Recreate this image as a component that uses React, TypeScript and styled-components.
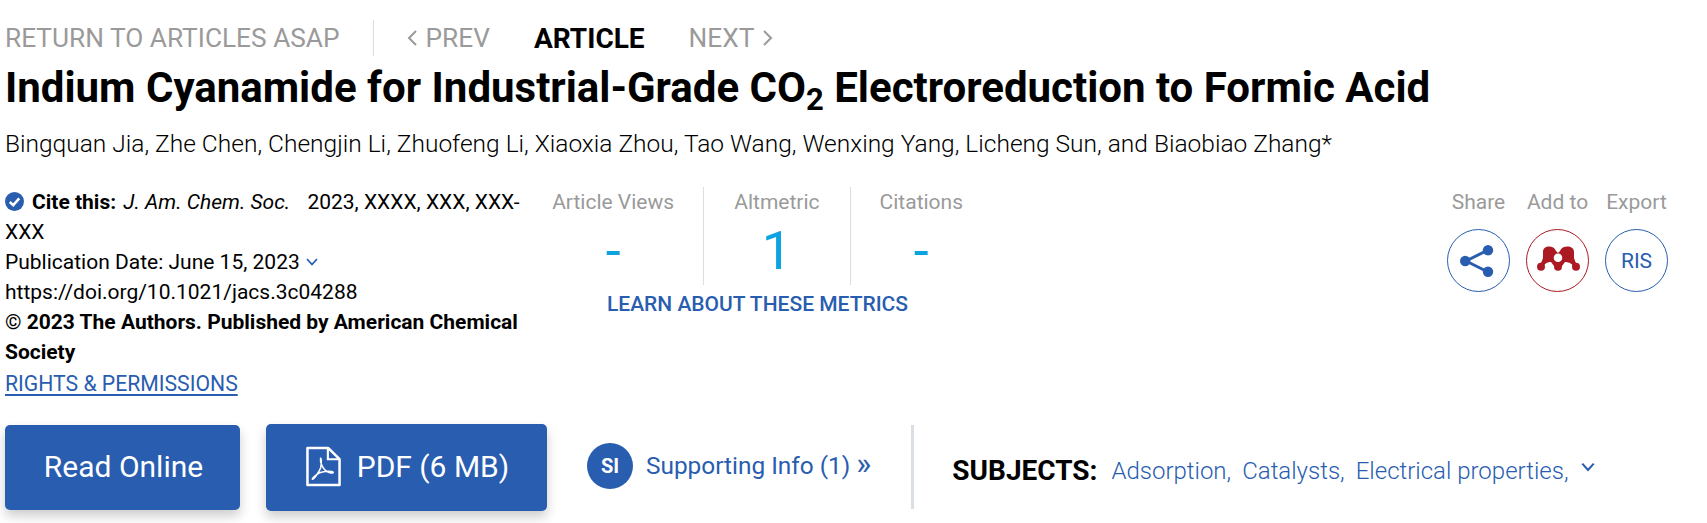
import React from 'react';
import styled, {createGlobalStyle} from 'styled-components';

const BLUE = '#285daf';
const GREY = '#9a9a9a';
const RED = '#ab1a22';

const GlobalStyle = createGlobalStyle`
    html, body {
        margin: 0;
        padding: 0;
        background: #fff;
        color: #000;
        font-family: Roboto, 'Liberation Sans', sans-serif;
    }
`;

const Page = styled.div`
    width: 1707px;
    height: 523px;
    box-sizing: border-box;
    padding: 20px 39px 0 5px;
    overflow: hidden;
`;

const NavRow = styled.nav`
    display: flex;
    align-items: center;
    height: 36px;
    font-size: 26.25px;
    color: ${GREY};
`;

const NavGroup = styled.div`
    display: flex;
    align-items: center;
    gap: 44px;
`;

const NavLink = styled.span<{ $current?: boolean }>`
    display: flex;
    align-items: center;
    gap: 7px;
    font-size: ${props => props.$current ? '28px' : 'inherit'};
    font-weight: ${props => props.$current ? 700 : 400};
    color: ${props => props.$current ? '#000' : GREY};
`;

const NavDivider = styled.span`
    width: 1px;
    height: 36px;
    background: #d9dfe5;
    margin: 0 33px;
`;

const Title = styled.h1`
    margin: 10px 0 0;
    font-size: 42px;
    line-height: 44px;
    font-weight: 700;
    white-space: nowrap;

    sub {
        font-size: 31px;
        line-height: 0;
        vertical-align: -8px;
    }
`;

const Authors = styled.p`
    margin: 19px 0 0;
    font-size: 24.5px;
    line-height: 30px;
    font-weight: 300;
    white-space: nowrap;
`;

const MetaRow = styled.div`
    display: flex;
    align-items: flex-start;
    margin-top: 28px;
`;

const CiteBlock = styled.div`
    width: 520px;
    font-size: 21px;
    line-height: 30px;
`;

const CheckBadge = styled.svg`
    width: 19px;
    height: 19px;
    vertical-align: -2px;
    margin-right: 8px;
`;

const Journal = styled.i`
    margin: 0 12px 0 2px;
`;

const Chevron = styled.svg<{ $size?: number }>`
    width: ${props => props.$size || 14}px;
    height: ${props => props.$size || 14}px;
    fill: none;
    stroke: ${BLUE};
    stroke-width: 1.8;
`;

const RightsLink = styled.a`
    display: inline-block;
    margin-top: 2px;
    color: ${BLUE};
    font-size: 21.2px;
    text-decoration: underline;
    text-decoration-thickness: 2px;
    text-underline-offset: 3px;
`;

const Metrics = styled.div`
    width: 469px;
    margin-left: -2px;
`;

const MetricCols = styled.div`
    display: flex;
`;

const MetricCol = styled.div<{ $width: number }>`
    width: ${props => props.$width}px;
    height: 98px;
    text-align: center;
    border-left: 1px solid #d9dfe5;
    color: ${GREY};
    font-size: 21px;
    line-height: 30px;

    &:first-child {
        border-left: none;
    }
`;

const MetricValue = styled.div`
    color: #0ba3e0;
    font-size: 54px;
    line-height: 62px;
    margin-top: 3px;
`;

const LearnLink = styled.a`
    display: block;
    text-align: center;
    color: ${BLUE};
    font-size: 21px;
    font-weight: 500;
    line-height: 30px;
    margin-top: 4px;
`;

const Actions = styled.div`
    display: flex;
    gap: 16px;
    margin-left: auto;
`;

const Action = styled.div`
    display: flex;
    flex-direction: column;
    align-items: center;
    color: ${GREY};
    font-size: 21px;
    line-height: 30px;
    gap: 12px;
`;

const ActionCircle = styled.span<{ $color?: string }>`
    display: flex;
    align-items: center;
    justify-content: center;
    box-sizing: border-box;
    width: 63px;
    height: 63px;
    border-radius: 50%;
    border: 1px solid ${props => props.$color || BLUE};
    color: ${BLUE};
    font-size: 21px;
`;

const ButtonRow = styled.div`
    display: flex;
    align-items: center;
    margin-top: 25px;
`;

const Button = styled.a<{ $width: number; $height: number }>`
    display: flex;
    align-items: center;
    justify-content: center;
    gap: 16px;
    box-sizing: border-box;
    padding: 0 0 3px 2px;
    width: ${props => props.$width}px;
    height: ${props => props.$height}px;
    border-radius: 5px;
    background: ${BLUE};
    color: #fff;
    font-size: 30px;
    box-shadow: 0 6px 12px rgba(0, 0, 0, .2);
    margin-right: 26px;
`;

const SupportingInfo = styled.a`
    display: flex;
    align-items: center;
    gap: 13px;
    margin: 0 0 4px 14px;
    color: ${BLUE};
    font-size: 24.4px;
`;

const DoubleArrow = styled.span`
    font-size: 32px;
    line-height: 24px;
    margin-left: 6px;
`;

const SiBadge = styled.span`
    display: flex;
    align-items: center;
    justify-content: center;
    width: 46px;
    height: 46px;
    border-radius: 50%;
    background: ${BLUE};
    color: #fff;
    font-size: 20px;
    font-weight: 700;
`;

const Subjects = styled.div`
    display: flex;
    align-items: center;
    gap: 11px;
    height: 84px;
    border-left: 3px solid #d9dfe5;
    padding-left: 38px;
    margin: 0 0 2px 40px;
    font-size: 24px;
`;

const SubjectsLabel = styled.b`
    font-size: 28px;
    margin-right: 3px;
    padding-top: 8px;
`;

const SubjectLink = styled.a`
    color: ${BLUE};
    font-weight: 300;
    padding-top: 8px;
`;

const ShareSvg = styled.svg`
    margin-right: 3px;
`;

const ShareIcon = () => (
    <ShareSvg width="34" height="32" viewBox="0 0 34 32">
        <path d="M6 16 L28 5 M6 16 L28 27" stroke={BLUE} strokeWidth="3" fill="none" />
        <circle cx="5.2" cy="16" r="5.2" fill={BLUE} />
        <circle cx="28" cy="5.2" r="5.2" fill={BLUE} />
        <circle cx="28" cy="26.8" r="5.2" fill={BLUE} />
    </ShareSvg>
);

const MendeleyIcon = () => (
    <svg width="46" height="46" viewBox="-23 -23 46 46" fill={RED}>
        <circle cx="-17" cy="5.7" r="4" />
        <circle cx="0" cy="5.7" r="4" />
        <circle cx="18" cy="5.7" r="4" />
        <path d="M-19 3 C-16 2 -16 -1 -15 -3 L-15 -9 C-15 -16 -4 -16 -2 -10 L0 -8 L2 -10 C4 -16 16 -16 16 -9 L16 -3 C17 -1 17 2 20 3 L16 7 C15 3 11 1 7 1 L4 5 L-4 5 L-7 1 C-11 1 -14 3 -15 7 Z" />
        <circle cx="0" cy="-3.3" r="4.3" fill="#fff" />
    </svg>
);

const PdfIcon = () => (
    <svg width="35" height="41" viewBox="0 0 36 41" fill="none" stroke="#fff">
        <path d="M1.5 1.5 H23 L34.5 13 V39.5 H1.5 Z" strokeWidth="2.6" strokeLinejoin="round" />
        <path d="M22.5 1.5 V13 H34.5" strokeWidth="2.2" />
        <path d="M15 12 C14 17 18 24 22 26 C24 27 28 28 28 26.5 C27 25 19 25 14 27 C10 29 6 33 6.5 33.5 C8 34 13 27 15 22 C16 18 16 12 15 12 Z" strokeWidth="1.6" />
    </svg>
);

const subjects = ['Adsorption,', 'Catalysts,', 'Electrical properties,'];

const App = () => {
    return (
        <Page>
            <GlobalStyle />
            <NavRow>
                <NavLink>RETURN TO ARTICLES ASAP</NavLink>
                <NavDivider />
                <NavGroup>
                    <NavLink>
                        <svg width="12" height="18" viewBox="0 0 12 18" fill="none" stroke={GREY} strokeWidth="2"><path d="M9 2 L2 9 L9 16" /></svg>
                        PREV
                    </NavLink>
                    <NavLink $current>ARTICLE</NavLink>
                    <NavLink>
                        NEXT
                        <svg width="12" height="18" viewBox="0 0 12 18" fill="none" stroke={GREY} strokeWidth="2"><path d="M3 2 L10 9 L3 16" /></svg>
                    </NavLink>
                </NavGroup>
            </NavRow>
            <Title>Indium Cyanamide for Industrial-Grade CO<sub>2</sub> Electroreduction to Formic Acid</Title>
            <Authors>Bingquan Jia, Zhe Chen, Chengjin Li, Zhuofeng Li, Xiaoxia Zhou, Tao Wang, Wenxing Yang, Licheng Sun, and Biaobiao Zhang*</Authors>
            <MetaRow>
                <CiteBlock>
                    <div>
                        <CheckBadge viewBox="0 0 18 18">
                            <circle cx="9" cy="9" r="9" fill={BLUE} />
                            <path d="M4.5 9.5 L7.8 12.5 L13.5 6" stroke="#fff" strokeWidth="2.4" fill="none" />
                        </CheckBadge>
                        <b>Cite this:</b> <Journal>J. Am. Chem. Soc.</Journal> 2023, XXXX, XXX, XXX-XXX
                    </div>
                    <div>
                        Publication Date: June 15, 2023 <Chevron viewBox="0 0 14 14"><path d="M2 4 L7 9.5 L12 4" /></Chevron>
                    </div>
                    <div>https://doi.org/10.1021/jacs.3c04288</div>
                    <div><span>©</span> <b>2023 The Authors. Published by American Chemical Society</b></div>
                    <RightsLink>RIGHTS &amp; PERMISSIONS</RightsLink>
                </CiteBlock>
                <Metrics>
                    <MetricCols>
                        <MetricCol $width={181}>Article Views<MetricValue>-</MetricValue></MetricCol>
                        <MetricCol $width={146}>Altmetric<MetricValue>1</MetricValue></MetricCol>
                        <MetricCol $width={142}>Citations<MetricValue>-</MetricValue></MetricCol>
                    </MetricCols>
                    <LearnLink>LEARN ABOUT THESE METRICS</LearnLink>
                </Metrics>
                <Actions>
                    <Action>Share<ActionCircle><ShareIcon /></ActionCircle></Action>
                    <Action>Add to<ActionCircle $color={RED}><MendeleyIcon /></ActionCircle></Action>
                    <Action>Export<ActionCircle>RIS</ActionCircle></Action>
                </Actions>
            </MetaRow>
            <ButtonRow>
                <Button $width={235} $height={85}>Read Online</Button>
                <Button $width={281} $height={87}><PdfIcon />PDF (6 MB)</Button>
                <SupportingInfo>
                    <SiBadge>SI</SiBadge>
                    <span>Supporting Info (1)<DoubleArrow>»</DoubleArrow></span>
                </SupportingInfo>
                <Subjects>
                    <SubjectsLabel>SUBJECTS:</SubjectsLabel>
                    {subjects.map(name => <SubjectLink key={name}>{name}</SubjectLink>)}
                    <Chevron $size={16} viewBox="0 0 14 14"><path d="M2 4 L7 9.5 L12 4" /></Chevron>
                </Subjects>
            </ButtonRow>
        </Page>
    );
};

export default App;
